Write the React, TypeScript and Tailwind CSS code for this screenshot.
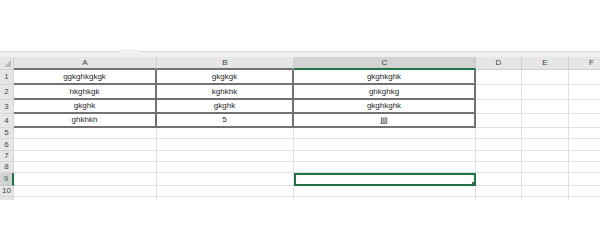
const cols = [
  { label: 'A', w: 'w-[143px]' },
  { label: 'B', w: 'w-[137px]' },
  { label: 'C', w: 'w-[182px]' },
  { label: 'D', w: 'w-[46px]' },
  { label: 'E', w: 'w-[47px]' },
  { label: 'F', w: 'w-[46px]' },
]

const rows = [
  { n: '1', h: 'h-[15px]', cells: ['ggkghkgkgk', 'gkgkgk', 'gkghkghk'] },
  { n: '2', h: 'h-[15px]', cells: ['hkghkgk', 'kghkhk', 'ghkghkg'] },
  { n: '3', h: 'h-[14px]', cells: ['gkghk', 'gkghk', 'gkghkghk'] },
  { n: '4', h: 'h-[14px]', cells: ['ghkhkh', '5', 'jjjj'] },
  { n: '5', h: 'h-[11px]', cells: [] },
  { n: '6', h: 'h-[12px]', cells: [] },
  { n: '7', h: 'h-[11px]', cells: [] },
  { n: '8', h: 'h-[11px]', cells: [] },
  { n: '9', h: 'h-[13px]', cells: [] },
  { n: '10', h: 'h-[11px]', cells: [] },
]

function Cell({ row, col, text }: { row: number; col: number; text?: string }) {
  const inTable = row < 4 && col < 3
  const selected = row === 8 && col === 2
  if (selected) {
    return (
      <div className={`${cols[col].w} relative shrink-0 border-2 border-[#217346]`}>
        <div className="absolute -bottom-[2px] -right-[2px] h-[4px] w-[4px] bg-[#217346]" />
      </div>
    )
  }
  return (
    <div
      className={`${cols[col].w} flex shrink-0 items-center justify-center text-[8px] leading-none text-[#262626] ${
        inTable ? 'border-b-2 border-r-2 border-[#727272]' : 'border-b border-r border-[#e1e1e1]'
      }`}
    >
      {text}
    </div>
  )
}

export default function App() {
  return (
    <div className="h-[250px] w-[600px] overflow-hidden bg-white" style={{ fontFamily: '"Liberation Sans", Arial, sans-serif' }}>
      <div className="h-[50px]" />

      {/* formula bar edge with splitter notch */}
      <div className="flex h-[2px]">
        <div className="w-[120px] border-b border-[#dcdcdc]" />
        <div className="w-[18px] border-t border-[#e4e4e4]" />
        <div className="flex-1 border-b border-[#dcdcdc]" />
      </div>
      <div className="h-[5px] bg-[#efefef]" />

      {/* column headers */}
      <div className="flex h-[13px] w-[700px] bg-[#e6e6e6]">
        <div className="relative w-[14px] shrink-0 border-r border-b border-[#d0d0d0]">
          <svg className="absolute bottom-[2px] right-[2px]" width="7" height="7" viewBox="0 0 7 7">
            <path d="M7 0V7H0Z" fill="#bdbdbd" />
          </svg>
        </div>
        {cols.map((c, i) => (
          <div
            key={c.label}
            className={`${c.w} flex shrink-0 items-center justify-center text-[8px] leading-none ${
              i === 2
                ? 'border-b-2 border-r border-b-[#217346] border-r-[#c6c6c6] bg-[#d3d3d3] text-[#333]'
                : i < 2
                ? 'border-b-2 border-r border-b-[#727272] border-r-[#d0d0d0] text-[#444]'
                : 'border-b border-r border-[#d0d0d0] text-[#444]'
            }`}
          >
            {c.label}
          </div>
        ))}
      </div>

      {rows.map((r, ri) => (
        <div key={r.n} className={`flex ${r.h} w-[700px]`}>
          <div
            className={`flex w-[14px] shrink-0 items-center justify-center text-[8px] leading-none ${
              ri === 8
                ? 'border-b border-r-2 border-b-[#c6c6c6] border-r-[#217346] bg-[#d3d3d3] text-[#217346]'
                : 'border-b border-r border-[#d6d6d6] bg-[#e6e6e6] text-[#444]'
            }`}
          >
            {r.n}
          </div>
          {cols.map((c, ci) => (
            <Cell key={c.label} row={ri} col={ci} text={r.cells[ci]} />
          ))}
        </div>
      ))}

      <div className="flex h-[3px] w-[700px]">
        <div className="w-[14px] shrink-0 border-r border-[#d6d6d6] bg-[#e6e6e6]" />
        {cols.map((c) => (
          <div key={c.label} className={`${c.w} shrink-0 border-r border-[#e1e1e1]`} />
        ))}
      </div>
    </div>
  )
}
